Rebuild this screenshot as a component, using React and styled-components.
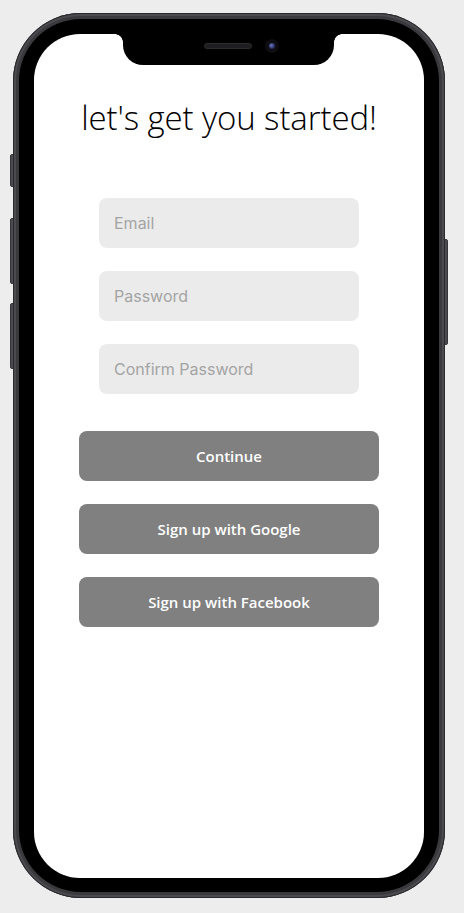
import React from "react";
import styled, { createGlobalStyle } from "styled-components";

const Global = createGlobalStyle`
  html, body { margin: 0; padding: 0; background: #ededed; }
  body { font-family: "Open Sans", "Liberation Sans", sans-serif; }
  * { box-sizing: border-box; }
`;

const Page = styled.div`
  position: relative;
  z-index: 0;
  padding: 13px 0 0 13px;
  min-height: 913px;
`;

const Frame = styled.div`
  position: relative;
  width: 432px;
  height: 885px;
  padding: 6px;
  border-radius: 68px;
  background: #3a3a3e;
  box-shadow: inset 0 0 0 1px #2a2a2d, inset 0 0 0 3px #4a4a4f;
`;

const Bezel = styled.div`
  width: 100%;
  height: 100%;
  padding: 15px 14px 12px 15px;
  border-radius: 62px;
  background: #000;
`;

const Screen = styled.div`
  position: relative;
  width: 390px;
  height: 844px;
  border-radius: 46px;
  background: #fff;
  overflow: hidden;
  display: flex;
  flex-direction: column;
  align-items: center;
`;

const SideButton = styled.div`
  position: absolute;
  width: 5px;
  top: ${(p) => p.$top}px;
  height: ${(p) => p.$h}px;
  ${(p) => (p.$right ? "right: -3px;" : "left: -3px;")}
  background: #4a4a50;
  border: 1px solid #36363a;
  border-radius: 2px;
  z-index: -1;
`;

const Notch = styled.div`
  position: absolute;
  top: 0;
  left: 89px;
  width: 211px;
  height: 31px;
  background: #000;
  border-radius: 0 0 20px 20px;
  &::before, &::after {
    content: "";
    position: absolute;
    top: 0;
    width: 8px;
    height: 8px;
  }
  &::before {
    left: -8px;
    background: radial-gradient(circle at 0 100%, transparent 7.5px, #000 8px);
  }
  &::after {
    right: -8px;
    background: radial-gradient(circle at 100% 100%, transparent 7.5px, #000 8px);
  }
`;

const Speaker = styled.div`
  position: absolute;
  left: 81px;
  top: 9px;
  width: 48px;
  height: 6px;
  border-radius: 3px;
  background: #1e1e20;
  border: 1px solid #2c2c2f;
`;

const Camera = styled.div`
  position: absolute;
  left: 142px;
  top: 5px;
  width: 14px;
  height: 14px;
  border-radius: 50%;
  background: #0d0d12;
  &::after {
    content: "";
    position: absolute;
    left: 4px;
    top: 4px;
    width: 6px;
    height: 6px;
    border-radius: 50%;
    background: radial-gradient(circle at 40% 40%, #6a7ab8, #28306a 60%, #111 100%);
  }
`;

const Title = styled.h1`
  margin: 61px 0 0;
  font-family: "Open Sans", sans-serif;
  font-weight: 300;
  font-size: 33px;
  line-height: 46px;
  color: #000;
  letter-spacing: -0.1px;
`;

const Form = styled.div`
  margin-top: 57px;
  display: flex;
  flex-direction: column;
  align-items: center;
  gap: 23px;
`;

const Input = styled.input`
  width: 260px;
  height: 50px;
  border: none;
  outline: none;
  border-radius: 8px;
  background: #ebebeb;
  padding: 0 15px;
  font-family: Inter, "Noto Sans", sans-serif;
  font-size: 16px;
  color: #333;
  &::placeholder { color: #a4a4a4; }
`;

const Actions = styled.div`
  margin-top: 37px;
  display: flex;
  flex-direction: column;
  gap: 23px;
`;

const Button = styled.button`
  width: 300px;
  height: 50px;
  border: none;
  border-radius: 8px;
  background: #808080;
  color: #fff;
  font-family: "Open Sans", "Noto Sans", sans-serif;
  font-weight: 600;
  font-size: 15px;
  cursor: pointer;
`;

export default function App() {
  return (
    <Page>
      <Global />
      <Frame>
        <SideButton $top={141} $h={33} />
        <SideButton $top={205} $h={66} />
        <SideButton $top={290} $h={66} />
        <SideButton $right $top={226} $h={106} />
        <Bezel>
          <Screen>
            <Notch>
              <Speaker />
              <Camera />
            </Notch>
            <Title>let's get you started!</Title>
            <Form>
              <Input type="email" placeholder="Email" />
              <Input type="password" placeholder="Password" />
              <Input type="password" placeholder="Confirm Password" />
            </Form>
            <Actions>
              <Button>Continue</Button>
              <Button>Sign up with Google</Button>
              <Button>Sign up with Facebook</Button>
            </Actions>
          </Screen>
        </Bezel>
      </Frame>
    </Page>
  );
}
